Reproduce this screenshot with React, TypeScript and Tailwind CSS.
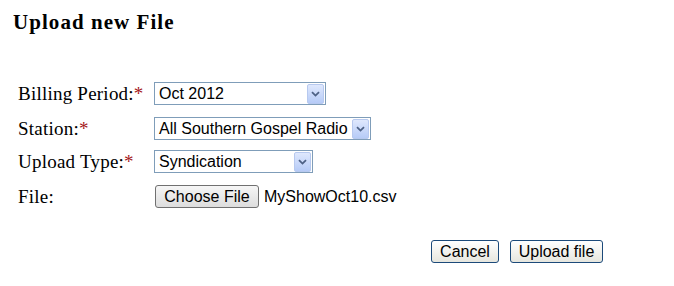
import React from 'react';

const serif = "font-['Times_New_Roman','Liberation_Serif',serif]";
const sans = "font-['Arial','Liberation_Sans',sans-serif]";

interface FakeSelectProps {
  value: string;
  width: string;
}

const SelectArrow: React.FC = () => (
  <div className="w-[17px] h-[20px] my-[1px] mr-[1px] rounded-[2px] border border-[#b7c9ef] bg-gradient-to-b from-[#dfe8fd] to-[#b6cbf7] flex items-center justify-center">
    <svg width="9" height="6" viewBox="0 0 9 6">
      <path d="M1 1.2 L4.5 4.6 L8 1.2" fill="none" stroke="#4d6185" strokeWidth="1.8" />
    </svg>
  </div>
);

const FakeSelect: React.FC<FakeSelectProps> = ({ value, width }) => (
  <div className={`${width} h-[23px] border border-[#7f9db9] bg-white flex items-center justify-between`}>
    <span className={`${sans} text-[16px] leading-none text-black pl-[4px] whitespace-nowrap`}>{value}</span>
    <SelectArrow />
  </div>
);

const Label: React.FC<{ text: string; required?: boolean }> = ({ text, required }) => (
  <div className={`${serif} w-[136px] text-[19px] leading-none text-black tracking-[0.012em] whitespace-nowrap`}>
    {text}
    {required && <span className="text-[#a4161a]">*</span>}
  </div>
);

const PlainButton: React.FC<{ children: React.ReactNode; className?: string }> = ({ children, className }) => (
  <div
    className={`${sans} ${className ?? ''} h-[23px] rounded-[3px] border border-[#1c4a7a] bg-gradient-to-b from-[#ffffff] to-[#e6e6de] text-[16px] leading-none text-black flex items-center justify-center`}
  >
    {children}
  </div>
);

const App: React.FC = () => {
  return (
    <div className="w-[674px] h-[286px] bg-white">
      <h3 className={`${serif} pl-[13px] pt-[10px] text-[21px] font-bold leading-[24px] tracking-[0.05em] text-black`}>
        Upload new File
      </h3>

      <div className="pl-[18px]">
        <div className="flex items-center mt-[48px]">
          <Label text="Billing Period:" required />
          <FakeSelect value="Oct 2012" width="w-[172px]" />
        </div>
        <div className="flex items-center mt-[12px]">
          <Label text="Station:" required />
          <FakeSelect value="All Southern Gospel Radio" width="w-[217px]" />
        </div>
        <div className="flex items-center mt-[10px]">
          <Label text="Upload Type:" required />
          <FakeSelect value="Syndication" width="w-[159px]" />
        </div>
        <div className="flex items-center mt-[12px]">
          <Label text="File:" />
          <div className="flex items-center">
            <div
              className={`${sans} ml-[1px] w-[104px] h-[23px] rounded-[3px] border border-[#707070] bg-gradient-to-b from-[#f6f6f6] to-[#dddddd] text-[16px] leading-none text-black flex items-center justify-center`}
            >
              Choose File
            </div>
            <span className={`${sans} ml-[5px] text-[16px] leading-none text-black`}>MyShowOct10.csv</span>
          </div>
        </div>
      </div>

      <div className="flex justify-end pr-[71px] mt-[32px] gap-[11px]">
        <PlainButton className="w-[68px]">Cancel</PlainButton>
        <PlainButton className="w-[93px]">Upload file</PlainButton>
      </div>
    </div>
  );
};

export default App;
